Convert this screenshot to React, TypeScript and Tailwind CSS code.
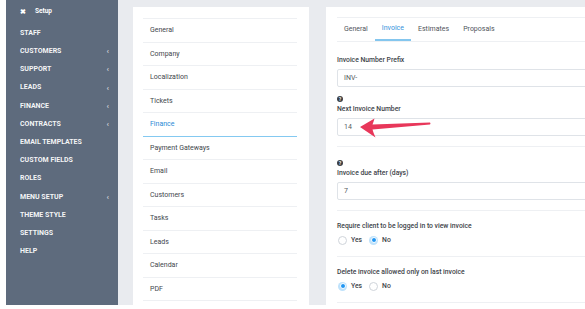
const menu = [
  { label: "STAFF" },
  { label: "CUSTOMERS", sub: true },
  { label: "SUPPORT", sub: true },
  { label: "LEADS", sub: true },
  { label: "FINANCE", sub: true },
  { label: "CONTRACTS", sub: true },
  { label: "EMAIL TEMPLATES" },
  { label: "CUSTOM FIELDS" },
  { label: "ROLES" },
  { label: "MENU SETUP", sub: true },
  { label: "THEME STYLE" },
  { label: "SETTINGS" },
  { label: "HELP" },
]

const groups = [
  "General",
  "Company",
  "Localization",
  "Tickets",
  "Finance",
  "Payment Gateways",
  "Email",
  "Customers",
  "Tasks",
  "Leads",
  "Calendar",
  "PDF",
]

const tabs = ["General", "Invoice", "Estimates", "Proposals"]

function Sidebar() {
  return (
    <aside className="ml-[6px] w-[112px] shrink-0 bg-[#5e6b7d] text-white">
      <div className="flex h-[24px] items-center pl-[14px]">
        <span className="text-[7px] font-bold leading-none">✖</span>
        <span className="ml-[9px] text-[6.5px] font-bold">Setup</span>
      </div>
      {menu.map((m) => (
        <div key={m.label} className="flex h-[18.2px] items-center justify-between pl-[14px] pr-[9px]">
          <span className="text-[7px] font-bold text-white/95">{m.label}</span>
          {m.sub && <span className="text-[8px] font-bold leading-none text-white/70">‹</span>}
        </div>
      ))}
    </aside>
  )
}

function Question() {
  return (
    <div className="flex h-[6px] w-[6px] items-center justify-center rounded-full bg-[#3b3f45] text-[5px] font-bold leading-none text-white">
      ?
    </div>
  )
}

function Field({ label, value, help }: { label: string; value: string; help?: boolean }) {
  return (
    <div>
      {help && <Question />}
      <div className={`${help ? "mt-[2px]" : ""} h-[10px] text-[6.8px] font-medium leading-[10px] text-[#3d4349]`}>{label}</div>
      <div className="mt-[4px] flex h-[18px] items-center rounded-[2px] border border-[#dfe3e8] pl-[6px] text-[7px] text-[#555b62]">
        {value}
      </div>
    </div>
  )
}

function Radio({ checked, className = "" }: { checked?: boolean; className?: string }) {
  return checked ? (
    <span className={`flex h-[9px] w-[9px] items-center justify-center rounded-full bg-[#bfe2fb] ${className}`}>
      <span className="h-[6px] w-[6px] rounded-full border border-white bg-[#2196f3]" />
    </span>
  ) : (
    <span className={`block h-[9px] w-[9px] rounded-full border border-[#cfd4da] bg-white ${className}`} />
  )
}

function YesNo({ label, yes }: { label: string; yes: boolean }) {
  return (
    <div>
      <div className="h-[10px] text-[6.8px] font-medium leading-[10px] text-[#3d4349]">{label}</div>
      <div className="mt-[4px] flex h-[10px] items-center pl-[1px] text-[6.8px] font-medium text-[#3d4349]">
        <Radio checked={yes} />
        <span className="ml-[4px]">Yes</span>
        <Radio checked={!yes} className="ml-[7px]" />
        <span className="ml-[4px]">No</span>
      </div>
    </div>
  )
}

export default function App() {
  return (
    <div className="relative h-[309px] w-[585px] overflow-hidden bg-white font-['Roboto',sans-serif]">
      <div className="flex h-[305px]">
        <Sidebar />
        <main className="flex flex-1 gap-[17px] bg-[#e9ebef] pl-[15px] pt-[7px]">
          <section className="w-[176px] shrink-0 bg-white pl-[10px] pr-[12px] pt-[11px]">
            <ul className="border-t border-[#eef0f3]">
              {groups.map((g) => (
                <li
                  key={g}
                  className={`flex h-[23.5px] items-center pl-[7px] text-[7px] ${
                    g === "Finance"
                      ? "border-b-[1.5px] border-[#84c9f1] text-[#2a8ad6]"
                      : "border-b border-[#eef0f3] text-[#42474d]"
                  }`}
                >
                  {g}
                </li>
              ))}
            </ul>
          </section>

          <section className="w-[300px] shrink-0 bg-white pl-[11px] pt-[10px]">
            <div className="flex h-[25px] border-y border-[#eef0f3]">
              {tabs.map((t) => (
                <div
                  key={t}
                  className={`flex items-center px-[7px] text-[7px] ${
                    t === "Invoice" ? "border-b-2 border-[#84c6ee] text-[#3592dc]" : "text-[#50565c]"
                  }`}
                >
                  {t}
                </div>
              ))}
            </div>

            <div className="mt-[13px]">
              <Field label="Invoice Number Prefix" value="INV-" />
            </div>
            <div className="mt-[9px]">
              <Field label="Next Invoice Number" value="14" help />
            </div>
            <div className="mt-[10px] border-t border-[#eef0f3]" />
            <div className="mt-[13px]">
              <Field label="Invoice due after (days)" value="7" help />
            </div>
            <div className="mt-[10px] border-t border-[#eef0f3]" />
            <div className="mt-[10px]">
              <YesNo label="Require client to be logged in to view invoice" yes={false} />
            </div>
            <div className="mt-[11px] border-t border-[#eef0f3]" />
            <div className="mt-[10px]">
              <YesNo label="Delete invoice allowed only on last invoice" yes />
            </div>
            <div className="mt-[11px] border-t border-[#eef0f3]" />
          </section>
        </main>
      </div>

      <svg className="absolute left-[355px] top-[112px]" width="80" height="30" viewBox="0 0 80 30">
        <path
          d="M5 15 L19.5 6.5 Q18.5 10 17.5 12.6 L75 10.6 Q76 11.6 75 12.6 L17.5 17.6 Q18.5 21.5 20.5 25.5 Z"
          fill="#e8375a"
        />
      </svg>
    </div>
  )
}
